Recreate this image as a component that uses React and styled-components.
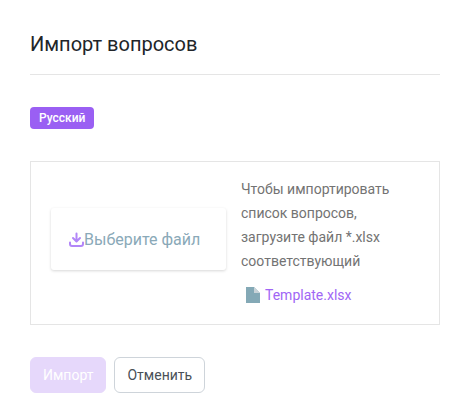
import React from 'react';
import styled, { createGlobalStyle } from 'styled-components';

const GlobalStyle = createGlobalStyle`
  html, body {
    margin: 0;
    padding: 0;
    background: #fff;
    font-family: Roboto, "Noto Sans", sans-serif;
  }
  * {
    box-sizing: border-box;
  }
`;

const Page = styled.div`
  width: 471px;
  height: 419px;
  padding: 30px 31px 0 30px;
  overflow: hidden;
`;

const Title = styled.h2`
  margin: 0;
  height: 45px;
  padding-bottom: 16px;
  border-bottom: 1px solid #e5e5e5;
  font-size: 20px;
  font-weight: 400;
  line-height: 28px;
  color: #212529;
`;

const LangRow = styled.div`
  height: 86px;
  padding-top: 32px;
`;

const Badge = styled.span`
  display: inline-block;
  height: 22px;
  padding: 0 9px;
  border-radius: 4px;
  background: #9a5ff3;
  color: #fff;
  font-size: 12px;
  font-weight: 500;
  line-height: 22px;
  vertical-align: top;
`;

const Panel = styled.div`
  display: flex;
  align-items: flex-start;
  height: 164px;
  padding: 46px 20px 0;
  border: 1px solid #e5e5e5;
`;

const UploadBox = styled.div`
  display: flex;
  align-items: center;
  flex-shrink: 0;
  width: 175px;
  height: 62px;
  padding-left: 18px;
  border-radius: 3px;
  background: #fff;
  box-shadow: 0 1px 3px rgba(0, 0, 0, 0.16);
  color: #8aa9b8;
  font-size: 16px;
`;

const UploadIcon = styled.svg`
  width: 15px;
  height: 15px;
  color: #b286f8;
`;

const Info = styled.div`
  margin-top: -31px;
  margin-left: 15px;
  font-size: 14px;
  line-height: 24px;
  color: #737373;
`;

const Lines = styled.div`
  width: 170px;
`;

const FileLink = styled.a`
  display: flex;
  align-items: center;
  gap: 5px;
  margin-top: 10px;
  padding-left: 5px;
  color: #a066f5;
  text-decoration: none;
`;

const Actions = styled.div`
  display: flex;
  gap: 8px;
  margin-top: 32px;
`;

const Button = styled.button`
  height: 36px;
  padding: 0 12px;
  border-radius: 6px;
  border: 1px solid ${(p) => (p.$primary ? '#e6d8fb' : '#ced4da')};
  background: ${(p) => (p.$primary ? '#e6d8fb' : '#fff')};
  color: ${(p) => (p.$primary ? '#fff' : '#495057')};
  font-family: inherit;
  font-size: 14px;
`;

export default function App() {
  return (
    <Page>
      <GlobalStyle />
      <Title>Импорт вопросов</Title>
      <LangRow>
        <Badge>Русский</Badge>
      </LangRow>
      <Panel>
        <UploadBox>
          <UploadIcon viewBox="0 0 15 15" fill="none" stroke="currentColor" strokeWidth="2" strokeLinecap="round" strokeLinejoin="round">
            <path d="M7.5 1.5v7.5M4 6l3.5 3.5L11 6" />
            <path d="M1 10.5v1.5a2 2 0 0 0 2 2h9a2 2 0 0 0 2-2v-1.5" />
          </UploadIcon>
          Выберите файл
        </UploadBox>
        <Info>
          <Lines>Чтобы импортировать список вопросов, загрузите файл *.xlsx соответствующий</Lines>
          <FileLink href="#">
            <svg width="14" height="16" viewBox="0 0 14 16">
              <path d="M0 0h8l6 6v10H0z" fill="#84a9b6" />
              <path d="M8 0l6 6H8z" fill="#c9d3d8" />
            </svg>
            Template.xlsx
          </FileLink>
        </Info>
      </Panel>
      <Actions>
        <Button $primary>Импорт</Button>
        <Button>Отменить</Button>
      </Actions>
    </Page>
  );
}
